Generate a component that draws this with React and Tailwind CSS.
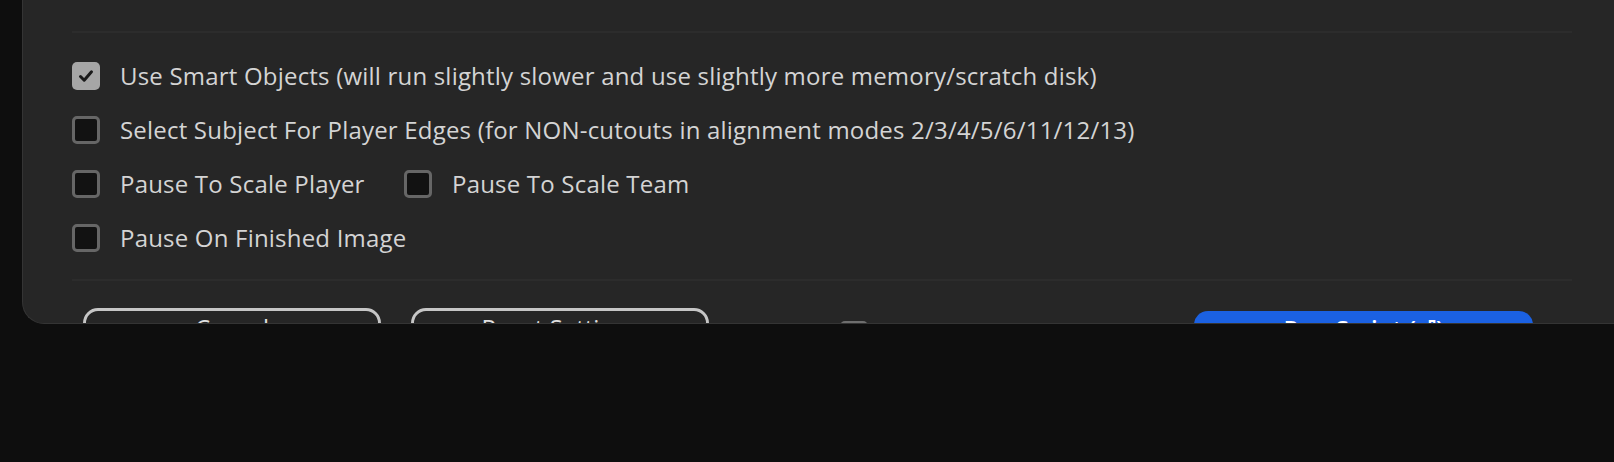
import React from "react";

const font = { fontFamily: '"Open Sans", "Liberation Sans", sans-serif' };

const Checkbox = ({ checked }) =>
	checked ? (
		<span className="flex h-[28px] w-[28px] shrink-0 items-center justify-center rounded-[5px] bg-[#a6a6a6]">
			<svg width="18" height="18" viewBox="0 0 18 18" fill="none">
				<path d="M3.5 9.5 L7.2 13.2 L14.5 4.8" stroke="#1a1a1a" strokeWidth="3" strokeLinecap="round" strokeLinejoin="round" />
			</svg>
		</span>
	) : (
		<span className="block h-[28px] w-[28px] shrink-0 rounded-[5px] border-[3px] border-[#666666] bg-[#121212]" />
	);

const Option = ({ checked, label, className = "" }) => (
	<label className={`flex items-center gap-[20px] ${className}`}>
		<Checkbox checked={checked} />
		<span className="whitespace-nowrap text-[24px] leading-none tracking-[0.2px] text-[#d4d4d4]">{label}</span>
	</label>
);

export default function App() {
	return (
		<div className="h-[462px] w-full overflow-hidden bg-[#0e0e0e]" style={font}>
			<div className="ml-[22px] h-[324px] overflow-hidden rounded-bl-[22px] border-b border-l border-[#343434] bg-[#262626]">
				<div className="pl-[49px] pr-[42px] pt-[31px]">
					<div className="h-[2px] bg-[#2c2c2c]" />

					<div className="mt-[29px] flex flex-col gap-[26px]">
						<Option checked label="Use Smart Objects (will run slightly slower and use slightly more memory/scratch disk)" />
						<Option label="Select Subject For Player Edges (for NON-cutouts in alignment modes 2/3/4/5/6/11/12/13)" />
						<div className="flex items-center">
							<Option className="w-[332px]" label="Pause To Scale Player" />
							<Option label="Pause To Scale Team" />
						</div>
						<Option label="Pause On Finished Image" />
					</div>

					<div className="mt-[27px] h-[2px] bg-[#2c2c2c]" />

					<div className="mt-[27px] flex items-start pl-[11px] pr-[39px]">
						<button className="h-[40px] w-[298px] rounded-[15px] border-[3px] border-[#c6c6c6] text-[24px] leading-none text-[#e0e0e0]">
							Cancel
						</button>
						<button className="ml-[30px] h-[40px] w-[298px] rounded-[15px] border-[3px] border-[#c6c6c6] text-[24px] leading-none text-[#e0e0e0]">
							Reset Settings
						</button>
						<label className="ml-[131px] mt-[13px] flex items-start gap-[20px]">
							<span className="block h-[28px] w-[28px] rounded-[5px] bg-[#6e6e6e]" />
							<span className="-mt-[1px] text-[24px] leading-none text-[#d4d4d4]">Remember Settings</span>
						</label>
						<button className="ml-auto mt-[3px] h-[36px] w-[339px] rounded-[14px] bg-[#1b61e2] text-[24px] font-semibold leading-none text-white">
							Run Script (⏎)
						</button>
					</div>
				</div>
			</div>
		</div>
	);
}
